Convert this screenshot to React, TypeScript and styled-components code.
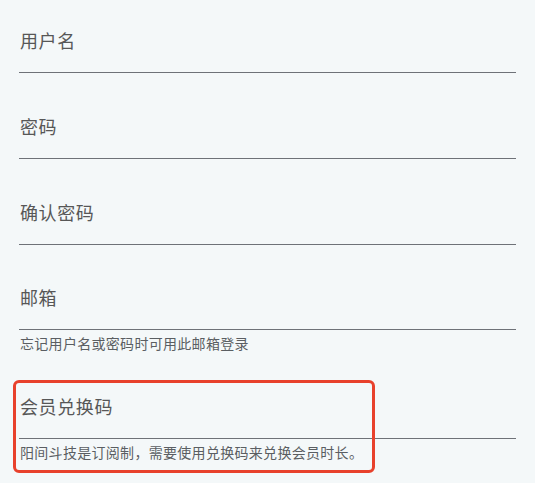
import styled, { createGlobalStyle } from 'styled-components';

const GlobalStyle = createGlobalStyle`
  html, body {
    margin: 0;
    padding: 0;
    background: #f4f8f9;
  }
  body {
    font-family: "Noto Sans CJK SC", "Noto Sans", sans-serif;
  }
`;

interface IField {
  label: string,
  helper?: string,
  highlight?: boolean,
  first?: boolean
}

const fields: IField[] = [
  { label: '用户名', first: true },
  { label: '密码' },
  { label: '确认密码' },
  { label: '邮箱', helper: '忘记用户名或密码时可用此邮箱登录' },
  { label: '会员兑换码', helper: '阳间斗技是订阅制，需要使用兑换码来兑换会员时长。', highlight: true },
];

const Field = ({ label, helper, highlight, first }: IField) => (
  <FieldStyled $first={first}>
    <InputBox>
      <Label>{label}</Label>
    </InputBox>
    {helper && <Helper>{helper}</Helper>}
    {highlight && <Highlight />}
  </FieldStyled>
);

export default function App() {
  return (
    <>
      <GlobalStyle />
      <Form>
        {fields.map((f) => (
          <Field key={f.label} {...f} />
        ))}
      </Form>
    </>
  );
}

const Form = styled.form`
  display: flex;
  flex-direction: column;
  width: 497px;
  padding: 0 19px 21px;
`;

const FieldStyled = styled.div<{ $first?: boolean }>`
  position: relative;
  display: flex;
  flex-direction: column;
  margin-top: ${(p) => (p.$first ? '16px' : '28.75px')};
`;

const InputBox = styled.div`
  box-sizing: border-box;
  height: 57px;
  padding-top: 12px;
  border-bottom: 1px solid #6e7278;
`;

const Label = styled.span`
  display: block;
  padding-left: 1px;
  font-size: 18px;
  line-height: 24px;
  letter-spacing: 0.6px;
  color: #575757;
`;

const Helper = styled.p`
  margin: 4px 0 0;
  padding-left: 1px;
  font-size: 14px;
  line-height: 19px;
  letter-spacing: 0.3px;
  color: #5a5e62;
`;

const Highlight = styled.div`
  position: absolute;
  top: -2px;
  left: -6px;
  width: 362px;
  height: 93px;
  box-sizing: border-box;
  border: 3px solid #e8412c;
  border-radius: 6px;
  pointer-events: none;
`;
